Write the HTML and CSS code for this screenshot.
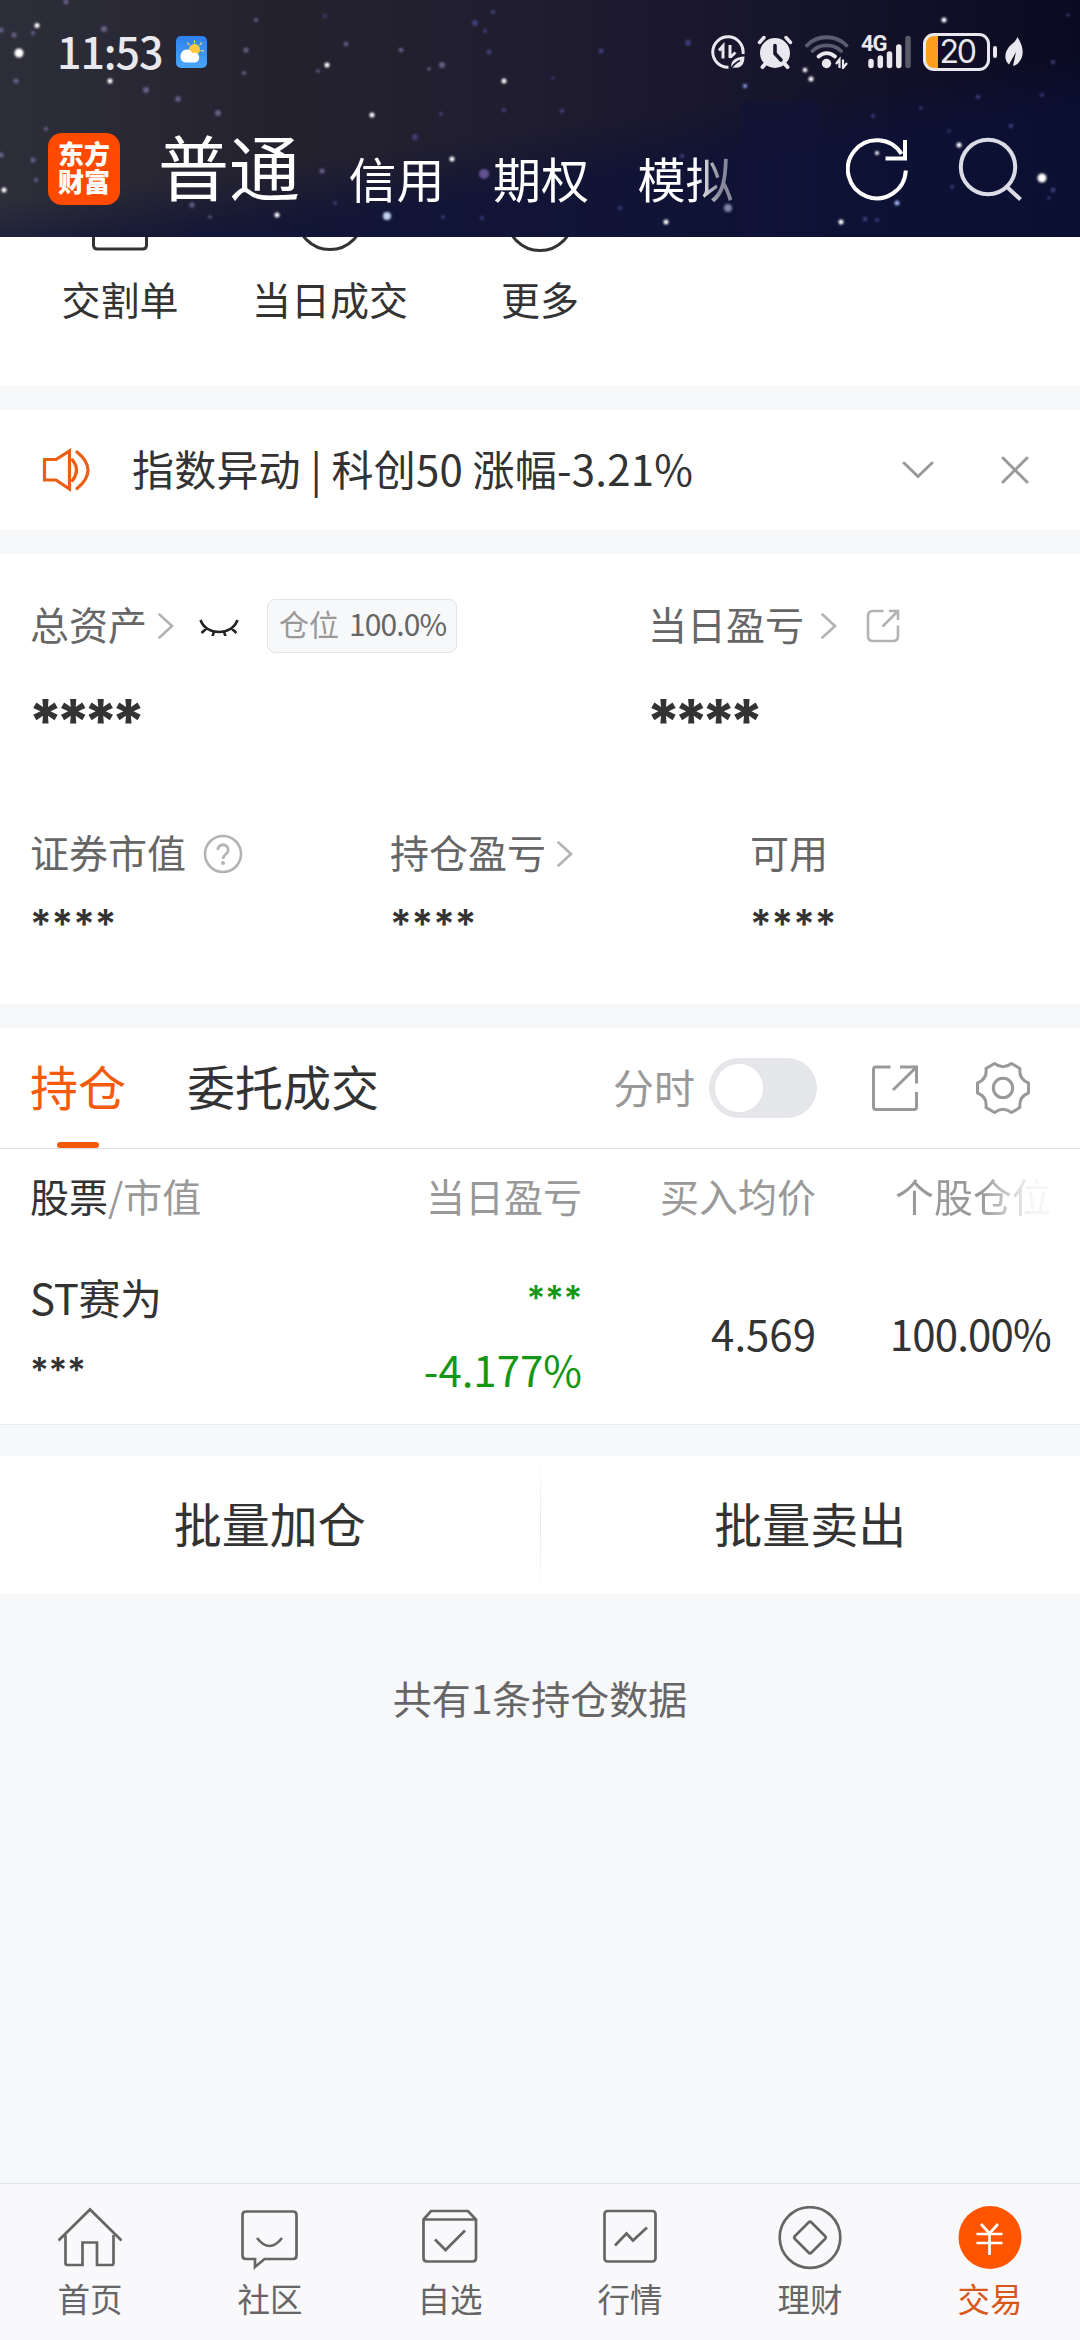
FILE: index.html
```html
<!DOCTYPE html>
<html lang="zh-CN">
<head>
<meta charset="utf-8">
<title>交易</title>
<link rel="stylesheet" href="styles.css">
</head>
<body>
<div class="page">
  <header class="header">
    <svg class="sky" viewBox="0 0 1080 237" aria-hidden="true">
      <defs><filter id="soft"><feGaussianBlur stdDeviation="0.8"/></filter></defs>
      <rect x="741" y="102" width="78" height="135" fill="#111439" opacity=".6"/>
      <g filter="url(#soft)">
        <g fill="#fff">
          <circle cx="19" cy="53" r="4.5"/><circle cx="37" cy="25.500" r="2.500"/><circle cx="110" cy="81" r="2.500"/><circle cx="327" cy="65" r="2.500"/><circle cx="372" cy="115" r="2.500"/><circle cx="504" cy="81" r="2.500"/><circle cx="452" cy="159" r="2.500"/><circle cx="4" cy="190" r="2.500"/><circle cx="277" cy="215" r="2.500"/><circle cx="387" cy="216" r="4" fill="#c3d2f4"/><circle cx="944" cy="20" r="2.500"/><circle cx="805" cy="70" r="2.300"/><circle cx="811" cy="79" r="2.500"/><circle cx="877" cy="153" r="2"/><circle cx="959" cy="145" r="2.500"/><circle cx="1042" cy="178" r="4.500"/><circle cx="841" cy="222" r="2.500"/><circle cx="666" cy="222" r="2.500"/><circle cx="897" cy="203" r="2.500" fill="#9fb4ee"/><circle cx="728" cy="208" r="4" fill="#7d84a6"/><circle cx="745" cy="86" r="2.200" fill="#7f91d8"/>
        </g>
        <g fill="#77709c" opacity=".8">
          <circle cx="14" cy="35" r="2.500"/><circle cx="1" cy="30" r="2.500"/><circle cx="33" cy="33" r="2"/><circle cx="104" cy="29" r="3"/><circle cx="66" cy="2" r="2.500"/><circle cx="16" cy="81" r="2.500"/><circle cx="146" cy="90" r="3"/><circle cx="178" cy="99" r="2.800"/><circle cx="218" cy="113" r="3"/><circle cx="246" cy="50" r="2.600"/><circle cx="256" cy="20" r="2"/><circle cx="244" cy="73" r="2"/><circle cx="46" cy="129" r="2"/><circle cx="1" cy="155" r="2.500"/><circle cx="33" cy="160" r="2.500"/><circle cx="36" cy="180" r="2"/><circle cx="322" cy="171" r="2.600"/><circle cx="192" cy="205" r="2.600"/><circle cx="346" cy="44" r="2.300"/><circle cx="401" cy="50" r="2.300"/><circle cx="442" cy="65" r="3"/><circle cx="429" cy="69" r="1.800"/><circle cx="318" cy="71" r="1.800"/><circle cx="210" cy="217" r="1.800"/>
        </g>
        <g fill="#4b4b8e" opacity=".75">
          <circle cx="475" cy="23" r="3"/><circle cx="485" cy="31" r="2"/><circle cx="493" cy="12" r="2.200"/><circle cx="489" cy="52" r="2.500"/><circle cx="325" cy="16" r="2"/><circle cx="484" cy="174" r="5" fill="#7d66ae"/><circle cx="415" cy="137" r="3"/><circle cx="504" cy="110" r="2.200"/><circle cx="441" cy="114" r="2"/><circle cx="443" cy="217" r="2"/><circle cx="482" cy="218" r="2"/><circle cx="335" cy="203" r="2"/><circle cx="688" cy="43" r="3"/><circle cx="601" cy="51" r="2.500"/><circle cx="553" cy="78" r="1.800"/><circle cx="562" cy="111" r="2.200"/><circle cx="682" cy="156" r="2.200"/><circle cx="620" cy="208" r="2"/><circle cx="1053" cy="62" r="2.200"/><circle cx="1042" cy="95" r="2"/><circle cx="978" cy="97" r="2.300"/><circle cx="873" cy="116" r="2"/><circle cx="1011" cy="126" r="2.200"/><circle cx="949" cy="131" r="1.800"/><circle cx="921" cy="108" r="1.800"/><circle cx="1053" cy="190" r="2.500"/><circle cx="952" cy="187" r="2"/><circle cx="865" cy="219" r="2.400"/><circle cx="877" cy="220" r="2"/><circle cx="1049" cy="198" r="1.800"/><circle cx="1068" cy="15" r="1.800"/>
        </g>
      </g>
    </svg>
    <div class="status">
      <span class="clock">11:53</span>
      <svg class="weather" width="31" height="32" viewBox="0 0 31 32">
        <defs><linearGradient id="wb" x1="0" y1="0" x2="0" y2="1"><stop offset="0" stop-color="#2f80f0"/><stop offset="1" stop-color="#4aa5f8"/></linearGradient></defs>
        <rect width="31" height="32" rx="5" fill="url(#wb)"/>
        <circle cx="18.500" cy="13.500" r="5.500" fill="#fcc93a"/>
        <path d="M18.500 4.500v2.200M11.500 7l1.500 1.700M25.500 7L24 8.700M25 14.500l2.500.7" stroke="#fcd860" stroke-width="1.200" stroke-linecap="round"/>
        <path d="M9.500 26.500a5.700 5.700 0 0 1-5-5.500c0-3 1.500-7.500 6.500-7.500 3 0 4.500 1.500 5.200 3.700 3.500-1.700 7 .8 7 4.300 0 3-2.200 5-5 5z" fill="#fff"/>
      </svg>
      <div class="status-icons">
        <svg width="34" height="34" viewBox="0 0 34 34" fill="none" stroke="#e8e8ee">
          <path d="M32 19A15.200 15.200 0 1 0 17.500 32.200" stroke-width="3"/>
          <path d="M8 15.500l4-4.500v12.500M19 10v13" stroke-width="3"/><path d="M19 22.500l5.500-5" stroke-width="3"/>
          <path d="M20.500 33.500c-1.500-8 4-11.500 13-12 0 7-3 12.500-10.500 11z" fill="#e8e8ee" stroke="none"/><path d="M20 34c2-4 5-6.500 9-8.500" stroke="#15162e" stroke-width="1.500"/>
        </svg>
        <svg width="36" height="34" viewBox="0 0 36 34" stroke="#e8e8ee" stroke-linecap="round">
          <circle cx="18" cy="18" r="15" fill="#e8e8ee" stroke="none"/>
          <path d="M2.500 7.500l4.500-5M33.500 7.500l-4.500-5" stroke-width="3.400"/><path d="M5.500 32l4-4.500M30.500 32l-4-4.500" stroke-width="4"/>
          <path d="M18 10.500v8l6 6.500" stroke="#17172e" stroke-width="3.600" fill="none"/>
        </svg>
        <svg width="44" height="34" viewBox="0 0 44 34" fill="none" stroke-width="3.800" stroke-linecap="round">
          <path d="M2 10.500C12-.5 31-.5 41.500 10.500M7.500 16C15 8.500 28.500 8.500 36 16" stroke="#5c5c6e"/>
          <path d="M13.500 21.500c5-4.600 11.500-4.600 16.500 0" stroke="#e8e8ee"/>
          <circle cx="21.500" cy="28.500" r="4.700" fill="#e8e8ee"/>
          <path d="M31 29l3.500-4.500v8.500M38 24.500v8.500l4-5" stroke="#e8e8ee" stroke-width="2.200" stroke-linecap="butt"/>
        </svg>
        <span class="signal">
          <span class="net">4G</span>
          <svg width="50" height="34" viewBox="0 0 50 34" stroke-width="5.500" stroke-linecap="round">
            <path d="M10 26.500v4M19.300 23v7.500M28.500 19v11.500M37.800 12v18.500" stroke="#e8e8ee"/><path d="M47 3.500v27" stroke="#5a5a68"/>
          </svg>
        </span>
        <span class="battery"><span class="level">20</span></span>
        <span class="nub"></span>
        <svg class="leaf" width="18" height="30" viewBox="0 0 18 30"><path d="M12.500 0c5 8 6.500 15 4 21-2 4.500-4.500 7-8.500 8L11 15 4 27.500C-1 23-.5 16 3.500 10.500 6.500 7 11 4.500 12.500 0z" fill="#e8e8ee"/></svg>
      </div>
    </div>
    <div class="topnav">
      <div class="logo">东方<br>财富</div>
      <nav class="modes"><span class="mode active">普通</span><span class="mode">信用</span><span class="mode">期权</span><span class="mode">模拟</span></nav>
      <svg class="refresh" width="63" height="64" viewBox="845 138 63 64" fill="none" stroke="#fff" stroke-width="4"><path d="M904.800 171.500A29 29 0 1 1 900.500 155M904 141v19.500M884.500 159.500H906"/></svg>
      <svg width="64" height="64" viewBox="957 136 64 64" fill="none" stroke="#dcdce6" stroke-width="4"><circle cx="987" cy="166" r="27.200"/><path d="M1005.500 185.500l14 13"/></svg>
    </div>
  </header>

  <section class="shortcuts">
    <div class="shortcut"><svg width="66" height="18" viewBox="0 0 66 18"><path d="M6.500-6V8q0 4 4 4H55.500q4 0 4-4V-6"/></svg><span>交割单</span></div>
    <div class="shortcut"><svg width="66" height="18" viewBox="0 0 66 18"><circle cx="33" cy="-20.500" r="33"/></svg><span>当日成交</span></div>
    <div class="shortcut"><svg width="66" height="18" viewBox="0 0 66 18"><circle cx="33" cy="-19.500" r="33"/></svg><span>更多</span></div>
  </section>

  <section class="notice">
    <svg width="50" height="44" viewBox="42 448 50 44" fill="none" stroke="#ec5e14" stroke-width="3.200"><path d="M44.500 459.500h11.500L69.500 451v38L56 480H44.500z"/><path d="M72.500 460q8 10 0 20.500M77 452q22 18 0 36.500" stroke-linecap="round"/></svg>
    <span class="notice-text">指数异动 | 科创50 涨幅-3.21%</span>
    <svg class="down" width="32" height="18" viewBox="0 0 32 18" fill="none" stroke="#999" stroke-width="3" stroke-linecap="round"><path d="M2 2l14 13.500L30 2"/></svg>
    <svg width="28" height="28" viewBox="0 0 28 28" fill="none" stroke="#999" stroke-width="3" stroke-linecap="round"><path d="M2 2l24 24M26 2L2 26"/></svg>
  </section>

  <section class="assets">
    <div class="asset-row main">
      <div class="asset wide">
        <div class="label"><span class="cap">总资产</span><svg class="chev" width="16" height="26" viewBox="0 0 16 26"><path d="M1.500 1.500L14 13 1.500 24.500"/></svg>
          <svg class="eye" width="40" height="20" viewBox="199 617 40 20" fill="none" stroke="#222" stroke-width="2.600"><path d="M200.500 621C206 637 232 637 237.500 621M207 629l-5.500 5M214 632.500l-1.500 5M224 632.500l1.500 5M231 629l5.500 5"/></svg>
          <span class="tag"><span>仓位</span><b>100.0%</b></span></div>
        <div class="stars big">****</div>
      </div>
      <div class="asset">
        <div class="label"><span class="cap">当日盈亏</span><svg class="chev far" width="16" height="26" viewBox="0 0 16 26"><path d="M1.500 1.500L14 13 1.500 24.500"/></svg>
          <svg class="share" width="34" height="34" viewBox="0 0 34 34" fill="none" stroke="#b3b3b3" stroke-width="2.600"><path d="M17.500 2H7Q2 2 2 7V27q0 5 5 5H27q5 0 5-5V16.500M23 2h9v9M32 2L16.500 17.500"/></svg></div>
        <div class="stars big">****</div>
      </div>
    </div>
    <div class="asset-row sub">
      <div class="asset"><div class="label"><span class="cap">证券市值</span><svg class="help" width="40" height="40" viewBox="0 0 40 40" fill="none" stroke="#b3b3b3" stroke-width="2.600"><circle cx="20" cy="20" r="18"/><path d="M14.800 16c0-7 10.400-7 10.400 0 0 4.500-5.200 4-5.200 9" stroke-width="2.800"/><circle cx="20" cy="29" r="2" fill="#b3b3b3" stroke="none"/></svg></div><div class="stars">****</div></div>
      <div class="asset"><div class="label"><span class="cap">持仓盈亏</span><svg class="chev" width="16" height="26" viewBox="0 0 16 26"><path d="M1.500 1.500L14 13 1.500 24.500"/></svg></div><div class="stars">****</div></div>
      <div class="asset"><div class="label"><span class="cap">可用</span></div><div class="stars">****</div></div>
    </div>
  </section>

  <section class="holdings">
    <div class="tabs">
      <span class="tab active">持仓</span><span class="tab">委托成交</span>
      <span class="switch-label">分时</span><span class="switch"></span>
      <svg class="share" width="48" height="48" viewBox="870 1064 48 48" fill="none" stroke="#999" stroke-width="3"><path d="M889.500 1067H875q-2.500 0-2.500 2.500V1107q0 2.500 2.500 2.500H913q2.500 0 2.500-2.500V1092M899 1067h16.500V1083.500M915.500 1067L892 1090"/></svg>
      <svg class="gear" width="56" height="56" viewBox="974 1060 56 56" fill="none" stroke="#999" stroke-width="3"><path d="M993.500 1063.500Q1002 1070 1010.500 1063.500L1019 1068.500Q1017.500 1079 1027.500 1083V1093Q1017.500 1097 1019 1107.500L1010.500 1112.500Q1002 1106 993.500 1112.500L985 1107.500Q986.500 1097 976.500 1093V1083Q986.500 1079 985 1068.500Z" stroke-linejoin="round"/><circle cx="1002" cy="1088" r="9.700"/></svg>
    </div>
    <div class="row head"><span class="c1"><b>股票</b>/市值</span><span class="c2">当日盈亏</span><span class="c3">买入均价</span><span class="c4 fade">个股仓位</span></div>
    <div class="row stock">
      <div class="c1"><span class="name">ST赛为</span><span class="mask">***</span></div>
      <div class="c2 green"><span class="mask">***</span><span class="pct">-4.177%</span></div>
      <div class="c3">4.569</div><div class="c4">100.00%</div>
    </div>
  </section>

  <section class="actions"><span>批量加仓</span><i></i><span>批量卖出</span></section>
  <p class="summary">共有1条持仓数据</p>

  <nav class="tabbar">
    <a><svg viewBox="58 2206 64 64"><path d="M58.500 2240.500L90 2209.500l31.500 31M65.500 2235v28q0 2 2 2H82.500V2242.500H97V2265h14.500q2 0 2-2V2235"/></svg><span>首页</span></a>
    <a><svg viewBox="238 2206 64 64"><path d="M245.500 2211.500H293q3.500 0 3.500 3.500V2255.500q0 3.500-3.500 3.500H264.500L255 2267V2259H246q-3.500 0-3.500-3.500V2215q0-3.500 3.500-3.500M257 2238q12.500 16 25 0"/></svg><span>社区</span></a>
    <a><svg viewBox="417.500 2206 64 64"><path d="M423 2219.500L430.500 2211h37l8 8.500V2258q0 3.500-3.500 3.500H426.500q-3.500 0-3.500-3.500zH475.500M434.500 2239.500l10.500 10.500 19.500-19.500"/></svg><span>自选</span></a>
    <a><svg viewBox="597.500 2206 64 64"><rect x="604" y="2211" width="51" height="50.500" rx="3"/><path d="M614.500 2245.500L626 2233.500l6.500 7L646.500 2227.500"/></svg><span>行情</span></a>
    <a><svg viewBox="777.500 2206 64 64"><circle cx="809.500" cy="2237.500" r="30.300"/><path d="M808 2222.500q1.500-1.500 3 0L824.500 2236q1.500 1.500 0 3L811 2252.500q-1.500 1.500-3 0L794.500 2239q-1.500-1.500 0-3z"/></svg><span>理财</span></a>
    <a class="current"><svg viewBox="958 2206 64 64"><circle cx="990" cy="2237.500" r="31.500" fill="#f50" stroke="none"/><path stroke="#fff" d="M981 2224l8.500 9.500L998 2224M976.500 2234H1002.500M976.500 2243H1002.500M989.500 2233V2255"/></svg><span>交易</span></a>
  </nav>
</div>
</body>
</html>
```
FILE: styles.css
```css
* { box-sizing: border-box; }
body { margin: 0; background: #f7f8fa; color: #333; font-family: "Noto Sans CJK SC", "Noto Sans", sans-serif; }
svg { display: block; flex: none; }
b { font-weight: 400; }
.page { width: 1080px; height: 2340px; display: flex; flex-direction: column; overflow: hidden; white-space: nowrap; }

.header { position: relative; height: 237px; flex: none; color: #fff; background: linear-gradient(172deg, transparent 52%, rgba(11, 17, 56, .7) 68%), linear-gradient(90deg, #2e2e3b 0%, #25222f 25%, #201d30 48%, #17152c 72%, #0a0a22 100%); }
.sky { position: absolute; inset: 0; width: 1080px; height: 237px; }
.status { position: relative; height: 104px; display: flex; align-items: center; padding: 0 57px 0 57px; color: #e8e8ee; }
.clock { width: 119px; font: 400 43px/60px "Noto Sans CJK SC", sans-serif; font-weight: 500; letter-spacing: -1.1px; padding-bottom: 4px; }
.status-icons { margin-left: auto; display: flex; align-items: center; gap: 12px; padding-bottom: 1px; }
.signal { position: relative; display: block; }
.net { position: absolute; left: 0; top: -2px; font: 700 22px/22px "Roboto", sans-serif; letter-spacing: -1px; }
.battery { width: 67px; height: 38px; border: 3px solid #e8e8ee; border-radius: 11px; background: linear-gradient(90deg, #ff9d1e 12px, transparent 12px); }
.level { display: block; padding-left: 7px; font: 400 32px/32px "Inter", sans-serif; text-align: center; letter-spacing: -2.4px; margin-left: -6px; }
.nub { width: 4px; height: 12px; border-radius: 2px; background: #e8e8ee; margin-left: -9px; }
.leaf { margin-left: -4px; }
.topnav { position: relative; display: flex; height: 133px; align-items: center; padding: 0 58px 3px 48px; }
.logo { width: 72px; height: 72px; border-radius: 14px; background: #ff4a00; text-align: center; font: 900 26px/28px "Noto Sans CJK SC", sans-serif; padding-top: 6px; }
.modes { display: flex; align-items: flex-end; width: 686px; margin-bottom: 11px; padding-left: 38px; gap: 48.5px; -webkit-mask-image: linear-gradient(90deg, #000 575px, rgba(0,0,0,.5) 600px, rgba(0,0,0,.5) 620px); mask-image: linear-gradient(90deg, #000 575px, rgba(0,0,0,.5) 600px, rgba(0,0,0,.5) 620px); }
.mode { font-size: 48px; line-height: 54px; }
.mode.active { font-size: 71px; line-height: 80px; }
.refresh { margin-left: 40px; margin-right: 49px; }

.shortcuts { display: flex; height: 149px; flex: none; padding-left: 15px; background: #fff; }
.shortcut { width: 210px; display: flex; flex-direction: column; align-items: center; font-size: 39px; line-height: 56px; gap: 15px; }
.shortcut svg { fill: none; stroke: #333; stroke-width: 3; }

.notice { height: 120px; margin-top: 24px; flex: none; display: flex; align-items: center; padding: 0 51px 0 42px; background: #fff; }
.notice-text { margin-left: 40px; padding-bottom: 4px; font-size: 42px; line-height: 60px; letter-spacing: .2px; }
.down { margin-left: auto; margin-right: 67px; }

.assets { height: 450px; margin-top: 24px; flex: none; background: #fff; padding: 42px 30px 0; }
.asset-row { display: flex; }
.asset { width: 360px; flex: none; }
.asset.wide { width: 618px; }
.label { display: flex; align-items: center; height: 60px; font-size: 39px; color: #666; }
.cap { line-height: 56px; padding-bottom: 6px; }
.chev { fill: none; stroke: #b3b3b3; stroke-width: 2.6; margin-left: 11px; stroke-linecap: round; }
.chev.far { margin-left: 17px; }
.eye { margin-left: 25px; }
.tag { display: flex; margin-left: 28px; width: 190px; height: 54px; line-height: 47px; border: 1px solid #e3e4e8; border-radius: 8px; background: #f7f8fa; font-size: 30px; color: #999; padding-left: 11px; gap: 10px; }
.tag b { color: #666; letter-spacing: -.9px; }
.assets .share { margin-left: 29px; }
.help { margin-left: 17px; }
.stars { font: 600 40px/50px "Inter", sans-serif; height: 50px; }
.stars.big { font-weight: 800; font-size: 60px; line-height: 60px; height: 60px; letter-spacing: -7.3px; margin-left: -2px; }
.main .stars { margin-top: 35px; }
.sub { margin-top: 73px; }
.sub .stars { margin-top: 15px; }

.holdings { height: 397px; margin-top: 24px; flex: none; background: #fff; border-bottom: 1px solid #ebebeb; }
.tabs { position: relative; height: 121px; border-bottom: 1px solid #ddd; display: flex; align-items: center; padding-left: 30px; font-size: 48px; }
.tab { position: relative; line-height: 114px; height: 120px; margin-right: 61px; }
.tab.active { color: #f55a0a; }
.tab.active::after { content: ""; position: absolute; left: 27px; bottom: 0; width: 42px; height: 6px; border-radius: 3px; background: #f55a0a; }
.switch-label { margin-left: 173px; font-size: 41px; color: #999; padding-bottom: 5px; }
.switch { width: 108px; height: 60px; margin-left: 14px; border-radius: 30px; background: radial-gradient(circle at 30px 30px, #fff 23.5px, #e5e6e9 24.5px); }
.holdings .share { margin-left: 54px; }
.gear { margin-left: 56px; }
.row { display: grid; grid-template-columns: 300px 252px 234px 235px; padding-left: 30px; }
.head { height: 98px; line-height: 92px; font-size: 39px; color: #999; }
.head b { color: #333; }
.c2, .c3, .c4 { text-align: right; }
.fade { -webkit-mask-image: linear-gradient(90deg, #000 165px, rgba(0,0,0,.1) 215px); mask-image: linear-gradient(90deg, #000 165px, rgba(0,0,0,.1) 215px); }
.stock { height: 177px; font-size: 42px; line-height: 60px; }
.stock .c1, .stock .c2 { display: flex; flex-direction: column; }
.stock .c1 { padding-top: 20px; gap: 23px; }
.stock .c2 { padding-top: 31px; gap: 21px; }
.stock .c3, .stock .c4 { line-height: 171px; }
.stock .c4 { letter-spacing: -.8px; }
.mask { font: 600 35px/40px "Inter", sans-serif; letter-spacing: -.4px; }
.name { letter-spacing: -.4px; }
.green { color: #149714; }

.actions { height: 138px; margin-top: 31px; flex: none; display: flex; background: #fff; font-size: 48px; line-height: 132px; text-align: center; }
.actions span { flex: 1; }
.actions i { width: 1px; background: linear-gradient(transparent, #e8e8e8, transparent); }
.summary { margin: 75px 0 0; text-align: center; font-size: 39px; line-height: 56px; color: #666; }

.tabbar { margin-top: auto; height: 157px; flex: none; display: flex; border-top: 1px solid #e3e4e6; background: #f9f9fb; }
.tabbar a { width: 180px; display: flex; flex-direction: column; align-items: center; padding-top: 22px; font-size: 32.5px; line-height: 48px; color: #666; gap: 4px; }
.tabbar svg { width: 64px; height: 64px; fill: none; stroke: #666; stroke-width: 2.7; }
.tabbar .current { color: #d8571b; }
```
